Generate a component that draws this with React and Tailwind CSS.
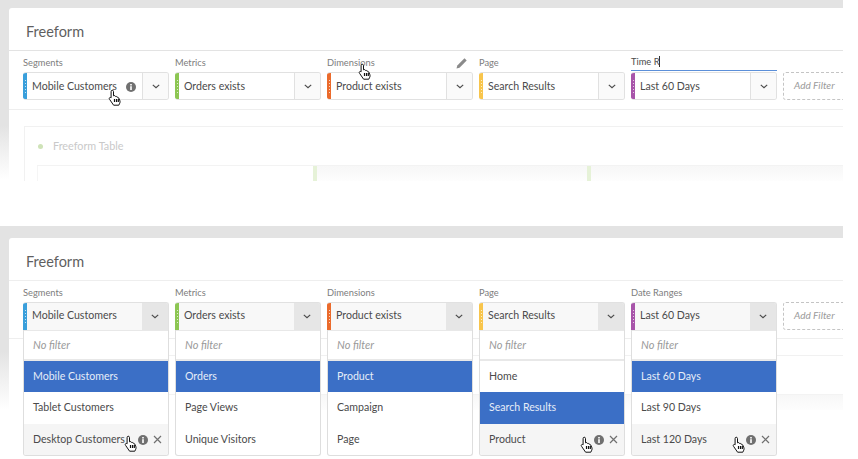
import React from "react";

const Hand = ({ className }) => (
  <svg viewBox="0 0 14 17" className={`absolute z-20 w-[14px] h-[17px] ${className}`}>
    <path
      d="M4.2 1.2c.8 0 1.3.6 1.3 1.4v4.2l.6-.2c.6-.2 1.1.1 1.3.6l.1.3c.6-.3 1.2-.1 1.5.5l.1.2c.6-.2 1.2 0 1.5.6l1.1 2.3c.6 1.4.4 2.8-.3 3.8l-.6 1.3H5.6L1.6 10.400c-.5-.6-.5-1.300 0-1.700.5-.4 1.100-.3 1.500.1V2.600c0-.8.400-1.400 1.100-1.400z"
      fill="#fff"
      stroke="#111"
      strokeWidth="1"
      strokeLinejoin="round"
    />
    <path d="M6.500 10v3M8.500 10v3M10.300 10v3" stroke="#111" strokeWidth="1.200" />
  </svg>
);

const Chevron = () => (
  <svg viewBox="0 0 10 6" className="w-[8px] h-[5px]">
    <path d="M1 1l4 3.500L9 1" fill="none" stroke="#4b4b4b" strokeWidth="1.500" />
  </svg>
);

const InfoIcon = () => (
  <svg viewBox="0 0 10 10" className="w-[10px] h-[10px] shrink-0">
    <circle cx="5" cy="5" r="5" fill="#707070" />
    <rect x="4.200" y="4.200" width="1.600" height="3.800" fill="#fff" />
    <rect x="4.200" y="2" width="1.600" height="1.500" fill="#fff" />
  </svg>
);

const CloseIcon = () => (
  <svg viewBox="0 0 9 9" className="w-[9px] h-[9px] shrink-0">
    <path d="M1 1l7 7M8 1L1 8" stroke="#707070" strokeWidth="1.200" />
  </svg>
);

const Grip = ({ color }) => (
  <div className={`w-[4px] shrink-0 flex flex-col items-center justify-center gap-[2px] ${color}`}>
    <span className="w-px h-px bg-white/70" />
    <span className="w-px h-px bg-white/70" />
    <span className="w-px h-px bg-white/70" />
    <span className="w-px h-px bg-white/70" />
    <span className="w-px h-px bg-white/70" />
  </div>
);

// closed filter box
const FilterBox = ({ color, value, info, open }) => (
  <div
    className={`flex h-[28px] border-[#e1e1e1] overflow-hidden ${
      open ? "rounded-t-[3px] border-t border-r bg-[#f8f8f8]" : "rounded-[3px] border border-l-0 bg-white"
    }`}
  >
    <Grip color={color} />
    <div
      className={`flex-1 flex items-center justify-between pl-[5px] pr-[6px] text-[#4b4b4b] ${
        open ? "pb-[2px]" : "pt-[1px]"
      }`}
    >
      <span>{value}</span>
      {info && <InfoIcon />}
    </div>
    <div
      className={`w-[26px] shrink-0 flex items-center justify-center ${
        open ? "bg-[#e6e6e6]" : "bg-[#fafafa] border-l border-[#e1e1e1]"
      }`}
    >
      <Chevron />
    </div>
  </div>
);

const Menu = ({ items, selected, hovered }) => (
  <div className="absolute z-10 left-0 top-[49px] w-[146px] bg-white border border-t-0 border-[#dedede] rounded-b-[3px] overflow-hidden">
    <div className="h-[31px] flex items-center pl-[9px] italic text-[11px] text-[#9a9a9a] border-t border-b-2 border-[#e8e8e8]">
      No filter
    </div>
    {items.map((item, i) => (
      <div
        key={item}
        className={`flex items-center justify-between pl-[9px] pr-[6px] ${i === 1 ? "h-[32px]" : "h-[31px]"} ${
          item === selected
            ? "bg-[#3b6fc6] text-[#e6edf8]"
            : item === hovered
            ? "bg-[#f5f5f5] text-[#4b4b4b]"
            : "text-[#4b4b4b]"
        }`}
      >
        <span>{item}</span>
        {item === hovered && (
          <span className="flex items-center gap-[5px]">
            <InfoIcon />
            <CloseIcon />
          </span>
        )}
      </div>
    ))}
  </div>
);

const Filter = ({ label, labelDark, caret, underline, pencil, color, value, info, menu }) => (
  <div className="relative w-[146px] shrink-0">
    <div
      className={`flex items-center justify-between pt-[2px] text-[9.300px] ${labelDark ? "text-[#4b4b4b]" : "text-[#7d7d7d]"} ${
        underline ? "h-[20px] mb-[1px] border-b border-[#5b8fd9]" : "h-[21px]"
      }`}
    >
      <span className="flex items-center">
        {label}
        {caret && <span className="w-px h-[11px] bg-[#333]" />}
      </span>
      {pencil && (
        <svg viewBox="0 0 12 12" className="w-[12px] h-[12px] mr-[5px]">
          <path d="M.5 11.500l.8-3L8.500 1.300l2.200 2.200-7.200 7.200z" fill="#8a8a8a" />
        </svg>
      )}
    </div>
    <FilterBox color={color} value={value} info={info} open={!!menu} />
    {menu && <Menu {...menu} />}
  </div>
);

const GhostTable = () => (
  <div className="mt-[16px] ml-[15px] h-[55px] overflow-hidden border-t border-l border-[#f1f1f1]">
    <div className="h-[38px] flex items-center pl-[13px] gap-[10px] text-[10.800px] text-[#c9c9c9]">
      <span className="w-[5px] h-[5px] rounded-full bg-[#cfe3b8]" />
      Freeform Table
    </div>
    <div className="ml-[12px] h-[20px] flex border-t border-[#f3f3f3]">
      <div className="w-[276px] border-l border-[#f5f5f5]" />
      <div className="w-[4px] bg-[#e6f2d8]" />
      <div className="w-[270px] bg-gradient-to-b from-[#f7f7f7] to-white" />
      <div className="w-[4px] bg-[#e6f2d8]" />
      <div className="flex-1 bg-gradient-to-b from-[#f7f7f7] to-white" />
    </div>
  </div>
);

const AddFilter = () => (
  <div className="w-[70px] shrink-0 pt-[21px]">
    <div className="h-[28px] flex items-center pl-[10px] pb-[1px] border border-dashed border-[#c4c4c4] rounded-[3px] italic text-[10px] text-[#9a9a9a]">
      Add Filter
    </div>
  </div>
);

const Panel = ({ filters, rowHeight, dividerColor }) => (
  <div className="relative ml-[9px] bg-white rounded-tl-[3px] overflow-hidden flex-1">
    <div className={`h-[43px] pl-[17px] pt-[6px] flex items-center text-[14.500px] text-[#5f5f5f] border-b ${dividerColor}`}>
      Freeform
    </div>
    <div className={`relative flex gap-[6px] pl-[14px] border-b border-[#eeeeee] ${rowHeight}`}>
      {filters.map((f) => (
        <Filter key={f.value} {...f} />
      ))}
      <AddFilter />
    </div>
    <GhostTable />
  </div>
);

const topFilters = [
  { label: "Segments", color: "bg-[#3a9fdb]", value: "Mobile Customers", info: true },
  { label: "Metrics", color: "bg-[#8dc653]", value: "Orders exists" },
  { label: "Dimensions", color: "bg-[#eb6b2c]", value: "Product exists", pencil: true },
  { label: "Page", color: "bg-[#f8c54c]", value: "Search Results" },
  { label: "Time R", labelDark: true, caret: true, underline: true, color: "bg-[#a855aa]", value: "Last 60 Days" },
];

const bottomFilters = [
  {
    label: "Segments",
    color: "bg-[#3a9fdb]",
    value: "Mobile Customers",
    menu: {
      items: ["Mobile Customers", "Tablet Customers", "Desktop Customers"],
      selected: "Mobile Customers",
      hovered: "Desktop Customers",
    },
  },
  {
    label: "Metrics",
    color: "bg-[#8dc653]",
    value: "Orders exists",
    menu: { items: ["Orders", "Page Views", "Unique Visitors"], selected: "Orders" },
  },
  {
    label: "Dimensions",
    color: "bg-[#eb6b2c]",
    value: "Product exists",
    menu: { items: ["Product", "Campaign", "Page"], selected: "Product" },
  },
  {
    label: "Page",
    color: "bg-[#f8c54c]",
    value: "Search Results",
    menu: { items: ["Home", "Search Results", "Product"], selected: "Search Results", hovered: "Product" },
  },
  {
    label: "Date Ranges",
    color: "bg-[#a855aa]",
    value: "Last 60 Days",
    menu: {
      items: ["Last 60 Days", "Last 90 Days", "Last 120 Days"],
      selected: "Last 60 Days",
      hovered: "Last 120 Days",
    },
  },
];

export default function App() {
  return (
    <div className="w-[858px] h-[459px] bg-white overflow-hidden font-['Lato',sans-serif] text-[10.600px]">
      <div className="w-[843px]">
        {/* Typing a new label */}
        <section className="relative h-[226px] pt-[8px] flex flex-col bg-[linear-gradient(#e3e3e3_125px,#fff_180px)]">
          <Panel filters={topFilters} rowHeight="h-[59px]" dividerColor="border-[#e3e3e3]" />
          <Hand className="left-[108px] top-[89px]" />
          <Hand className="left-[358px] top-[63px]" />
        </section>

        {/* Menus open */}
        <section className="relative h-[233px] pt-[12px] flex flex-col bg-[linear-gradient(#e3e3e3_125px,#fff_184px)]">
          <Panel filters={bottomFilters} rowHeight="h-[58px]" dividerColor="border-[#eeeeee]" />
          <Hand className="left-[124px] top-[209px]" />
          <Hand className="left-[580px] top-[210px]" />
          <Hand className="left-[732px] top-[210px]" />
        </section>
      </div>
    </div>
  );
}
